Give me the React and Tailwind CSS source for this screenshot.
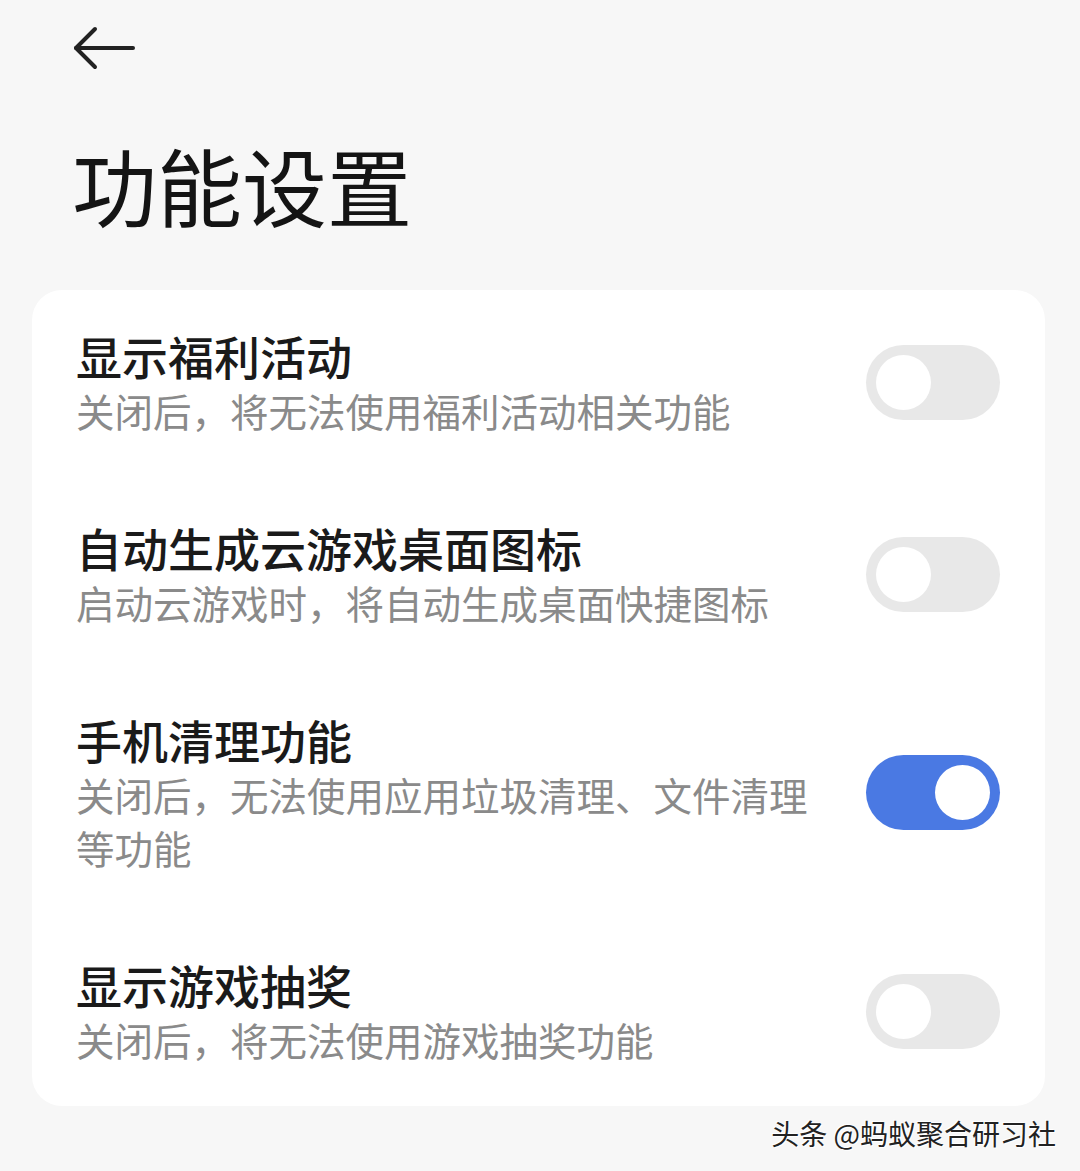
const items = [
  { title: "显示福利活动", desc: "关闭后，将无法使用福利活动相关功能", on: false },
  { title: "自动生成云游戏桌面图标", desc: "启动云游戏时，将自动生成桌面快捷图标", on: false },
  { title: "手机清理功能", desc: "关闭后，无法使用应用垃圾清理、文件清理等功能", on: true },
  { title: "显示游戏抽奖", desc: "关闭后，将无法使用游戏抽奖功能", on: false },
];

function Toggle({ on }) {
  return (
    <div
      className={`flex h-[75px] w-[134px] shrink-0 items-center rounded-full px-[10px] ${
        on ? "justify-end bg-[#4a79e3]" : "justify-start bg-[#e8e8e8]"
      }`}
    >
      <div className="h-[55px] w-[55px] rounded-full bg-white" />
    </div>
  );
}

export default function App() {
  return (
    <div
      className="relative min-h-[1171px] w-[1080px] bg-[#f7f7f7] px-[32px] pt-[26px]"
      style={{ fontFamily: '"Noto Sans CJK SC", "Noto Sans", sans-serif' }}
    >
      {/* Back */}
      <div className="pl-[41px]">
        <svg width="64" height="46" viewBox="0 0 64 46" fill="none" stroke="#222" strokeWidth="4" strokeLinecap="round" strokeLinejoin="round">
          <path d="M60 22H3" />
          <path d="M22 3L3 22l19 19" />
        </svg>
      </div>

      {/* Title */}
      <h1 className="mt-[62px] pl-[40px] text-[85px] font-normal leading-[100px] text-[#141414]">功能设置</h1>

      {/* Card */}
      <div className="mt-[56px] mr-[3px] flex flex-col gap-[82px] rounded-[30px] bg-white pl-[44px] pr-[45px] pb-[40px] pt-[37px]">
        {items.map((it, i) => (
          <div key={i} className="flex items-center justify-between">
            <div className="w-[750px]">
              <div className="text-[46px] font-medium leading-[57px] text-[#1a1a1a]">{it.title}</div>
              <div className="text-[38.5px] leading-[53px] text-[#8a8a8a]">{it.desc}</div>
            </div>
            <Toggle on={it.on} />
          </div>
        ))}
      </div>

      {/* Watermark */}
      <div className="absolute bottom-[20px] right-[24px] text-[28px] leading-[36px] text-[#222] [text-shadow:1px_1px_0_#fff,-1px_-1px_0_#fff]">
        头条 @蚂蚁聚合研习社
      </div>
    </div>
  );
}
